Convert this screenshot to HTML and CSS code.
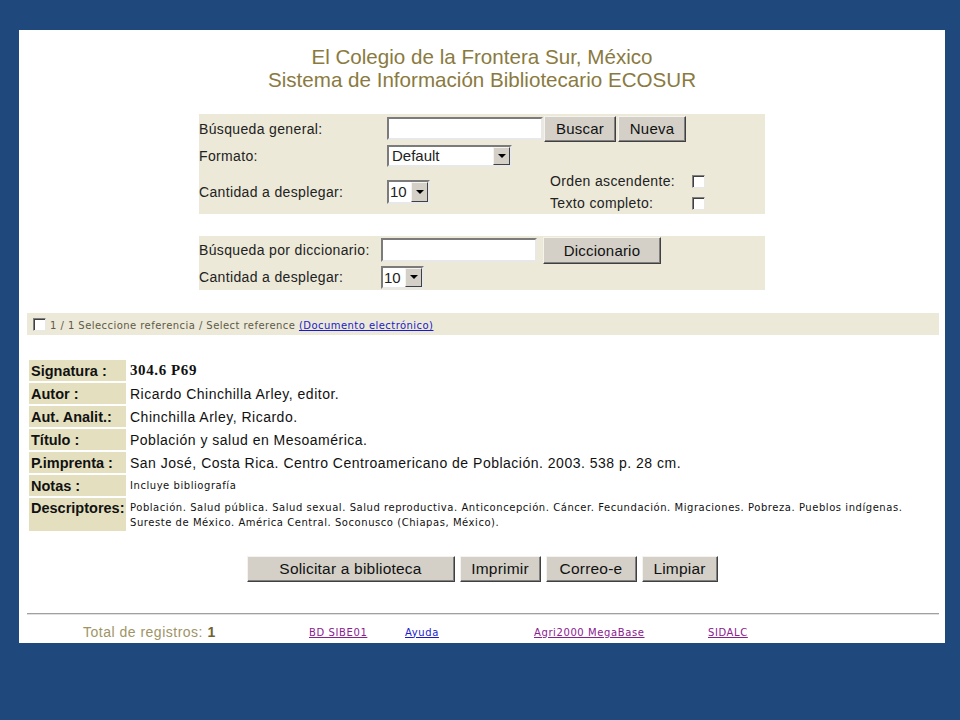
FILE: index.html
```html
<!DOCTYPE html>
<html lang="es">
<head>
  <meta charset="UTF-8" />
  <title>Sistema de Información Bibliotecario ECOSUR</title>
  <link rel="stylesheet" href="styles.css">
</head>
<body>
  <div class="slide">
    <div class="title">
      El Colegio de la Frontera Sur, México<br>
      Sistema de Información Bibliotecario ECOSUR
    </div>

    <form class="box box-main">
      <div class="row row-1">
        <span class="lbl">Búsqueda general:</span>
        <input type="text" class="txt">
        <button type="button" class="btn btn-buscar">Buscar</button>
        <button type="button" class="btn btn-nueva">Nueva</button>
      </div>
      <div class="row row-2">
        <span class="lbl">Formato:</span>
        <span class="sel sel-wide"><span class="sel-val">Default</span><span class="arrow"></span></span>
      </div>
      <div class="row row-3">
        <span class="lbl">Cantidad a desplegar:</span>
        <span class="sel sel-num"><span class="sel-val">10</span><span class="arrow"></span></span>
        <div class="opts">
          <span class="opt-lbl">Orden ascendente:</span><input type="checkbox" class="chk">
          <span class="opt-lbl">Texto completo:</span><input type="checkbox" class="chk">
        </div>
      </div>
    </form>

    <form class="box box-dict">
      <div class="row row-d1">
        <span class="lbl">Búsqueda por diccionario:</span>
        <input type="text" class="txt txt-dict">
        <button type="button" class="btn btn-dict">Diccionario</button>
      </div>
      <div class="row row-d2">
        <span class="lbl">Cantidad a desplegar:</span>
        <span class="sel sel-num"><span class="sel-val">10</span><span class="arrow"></span></span>
      </div>
    </form>

    <div class="refbar">
      <input type="checkbox" class="chk">
      <span>1 / 1 Seleccione referencia / Select reference <a href="#">(Documento electrónico)</a></span>
    </div>

    <table class="record">
      <tr><td class="k">Signatura :</td><td class="v sig">304.6 P69</td></tr>
      <tr><td class="k">Autor :</td><td class="v">Ricardo Chinchilla Arley, editor.</td></tr>
      <tr><td class="k">Aut. Analit.:</td><td class="v">Chinchilla Arley, Ricardo.</td></tr>
      <tr><td class="k">Título :</td><td class="v">Población y salud en Mesoamérica.</td></tr>
      <tr><td class="k">P.imprenta :</td><td class="v">San José, Costa Rica. Centro Centroamericano de Población. 2003. 538 p. 28 cm.</td></tr>
      <tr><td class="k">Notas :</td><td class="v small">Incluye bibliografía</td></tr>
      <tr class="desc"><td class="k">Descriptores:</td><td class="v small">Población. Salud pública. Salud sexual. Salud reproductiva. Anticoncepción. Cáncer. Fecundación. Migraciones. Pobreza. Pueblos indígenas.<br>Sureste de México. América Central. Soconusco (Chiapas, México).</td></tr>
    </table>

    <div class="actions">
      <button type="button" class="btn act-solicitar">Solicitar a biblioteca</button>
      <button type="button" class="btn act-imprimir">Imprimir</button>
      <button type="button" class="btn act-correo">Correo-e</button>
      <button type="button" class="btn act-limpiar">Limpiar</button>
    </div>

    <div class="rule"></div>

    <div class="footer">
      <span class="total">Total de registros: <b>1</b></span>
      <a href="#" class="visited f-bd">BD SIBE01</a>
      <a href="#" class="f-ayuda">Ayuda</a>
      <a href="#" class="visited f-agri">Agri2000 MegaBase</a>
      <a href="#" class="visited">SIDALC</a>
    </div>
  </div>
</body>
</html>
```

FILE: styles.css
```css
body {
  margin: 0;
  background-color: #1f497d;
  font-family: 'Liberation Sans', Arial, sans-serif;
}

.slide {
  margin: 30px 0 0 19px;
  width: 926px;
  height: 613px;
  background-color: #fff;
  overflow: hidden;
}

.title {
  padding-top: 15px;
  text-align: center;
  font-size: 20.6px;
  line-height: 23px;
  color: #8a7a40;
}

.box {
  width: 566px;
  margin: 23px auto 0;
  background-color: #ece9d8;
  font-size: 14px;
  letter-spacing: 0.35px;
  color: #222;
}

.box-dict {
  margin-top: 22px;
}

.row {
  display: flex;
  align-items: center;
}

.row-1 { height: 29px; }
.row-2 { height: 26px; }
.row-3 { height: 45px; }
.row-d1 { height: 28px; }
.row-d2 { height: 26px; }

.lbl {
  width: 188px;
  flex: none;
}

.box-dict .lbl {
  width: 182px;
}

.txt {
  box-sizing: border-box;
  width: 156px;
  height: 23px;
  margin: 0;
  padding: 1px 3px;
  border: 2px solid;
  border-color: #7b7b7b #e8e8e8 #e8e8e8 #7b7b7b;
  background: #fff;
  font: 14px 'Liberation Sans', Arial, sans-serif;
}

.txt-dict {
  height: 24px;
  margin-right: 6px;
}

.btn {
  box-sizing: border-box;
  height: 26px;
  margin: 0;
  padding: 0;
  border: 1px solid;
  border-color: #f4f3ee #404040 #404040 #f4f3ee;
  box-shadow: inset -1px -1px #808080;
  background-color: #d4d0c8;
  font: 15px 'Liberation Sans', Arial, sans-serif;
  letter-spacing: 0.2px;
  color: #111;
}

.btn-buscar { width: 72px; margin-left: 1px; }
.btn-nueva { width: 68px; margin-left: 2px; }
.btn-dict { width: 118px; height: 27px; }

.sel {
  box-sizing: border-box;
  display: inline-flex;
  align-items: stretch;
  height: 22px;
  border: 2px solid;
  border-color: #7b7b7b #e8e8e8 #e8e8e8 #7b7b7b;
  background: #fff;
  letter-spacing: 0;
}

.sel-wide { width: 125px; }
.sel-num { width: 43px; height: 24px; }
.row-d2 .sel-num { height: 23px; }

.sel-val {
  flex: 1;
  padding-left: 3px;
  line-height: 18px;
  font-size: 15px;
}

.sel-num .sel-val {
  padding-left: 1px;
  line-height: 20px;
}

.arrow {
  box-sizing: border-box;
  width: 17px;
  border: 1px solid;
  border-color: #f4f3ee #404040 #404040 #f4f3ee;
  background-color: #d4d0c8;
  display: flex;
  align-items: center;
  justify-content: center;
}

.arrow::after {
  content: "";
  border-left: 4px solid transparent;
  border-right: 4px solid transparent;
  border-top: 4px solid #000;
}

.opts {
  display: grid;
  grid-template-columns: 142px 13px;
  grid-auto-rows: 22px;
  align-items: center;
  margin-left: 120px;
  margin-top: 1px;
}

.chk {
  appearance: none;
  box-sizing: border-box;
  width: 13px;
  height: 13px;
  margin: 0;
  border: 1px solid;
  border-color: #808080 #e8e8e8 #e8e8e8 #808080;
  box-shadow: inset 1px 1px #404040;
  background: #fff;
}

.refbar {
  display: flex;
  align-items: center;
  height: 22px;
  margin: 23px 6px 0 8px;
  padding-left: 6px;
  background-color: #ece9d8;
  font: 10px 'DejaVu Sans', Verdana, sans-serif;
  letter-spacing: 0.45px;
  color: #5e5a48;
}

.refbar span {
  padding-top: 3px;
}

.refbar .chk {
  margin-right: 4px;
}

.refbar a {
  color: #1a1acc;
}

.record {
  margin: 23px 0 0 8px;
  border-spacing: 2px;
  font-size: 14px;
  color: #111;
}

.record td {
  height: 21px;
  padding: 0 2px;
  vertical-align: middle;
  letter-spacing: 0.5px;
}

.record .k {
  box-sizing: border-box;
  width: 97px;
  max-width: 97px;
  background-color: #e4e0bf;
  font-weight: bold;
  font-size: 14.5px;
  letter-spacing: 0;
  white-space: nowrap;
}

.record .sig {
  font-family: 'Liberation Serif', 'Times New Roman', serif;
  font-weight: bold;
  font-size: 15px;
  letter-spacing: 0.6px;
}

.record .small {
  font: 10px/15px 'DejaVu Sans', Verdana, sans-serif;
  letter-spacing: 0.55px;
}

.record .desc td {
  height: 31px;
  vertical-align: top;
  padding-top: 2px;
}

.actions {
  display: flex;
  justify-content: center;
  gap: 5px;
  margin-top: 23px;
}

.actions .btn {
  height: 26px;
  font-size: 15.5px;
}

.act-solicitar { width: 208px; }
.act-imprimir { width: 81px; }
.act-correo { width: 91px; }
.act-limpiar { width: 76px; }

.rule {
  height: 1px;
  margin: 31px 6px 0 8px;
  border-top: 1px solid #a0a0a0;
  background-color: #e0e0e0;
}

.footer {
  display: flex;
  align-items: center;
  height: 30px;
  padding: 2px 0 0 64px;
  font: 10px 'DejaVu Sans', Verdana, sans-serif;
  letter-spacing: 0.6px;
}

.footer a {
  color: #1a1acc;
}

.footer a.visited {
  color: #8a2090;
}

.total {
  width: 226px;
  font: 14px 'Liberation Sans', Arial, sans-serif;
  letter-spacing: 0.5px;
  color: #a09466;
}

.total b {
  color: #6e6330;
}

.f-bd { width: 96px; }
.f-ayuda { width: 129px; }
.f-agri { width: 174px; }
```
